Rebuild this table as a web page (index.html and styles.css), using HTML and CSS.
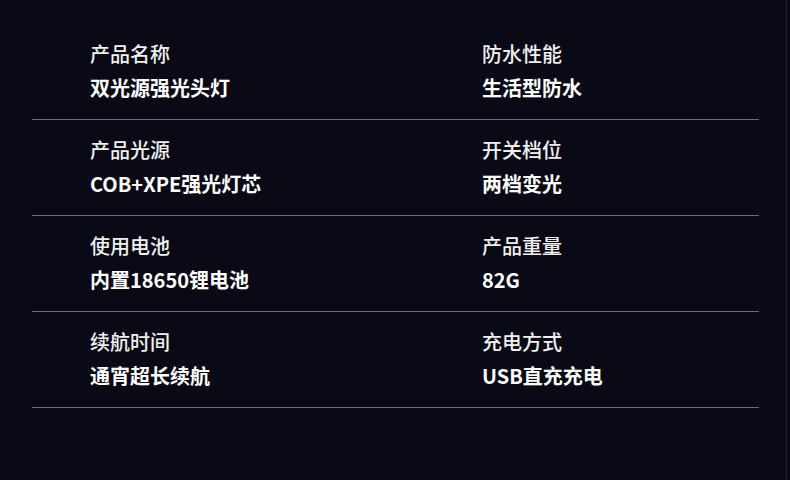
FILE: index.html
```html
<!DOCTYPE html>
<html lang="zh-CN">
<head>
<meta charset="utf-8">
<link rel="stylesheet" href="styles.css">
</head>
<body>
<div class="page">
  <div class="table">
    <div class="row">
      <div class="cell"><div class="label">产品名称</div><div class="value">双光源强光头灯</div></div>
      <div class="cell"><div class="label">防水性能</div><div class="value">生活型防水</div></div>
    </div>
    <div class="row">
      <div class="cell"><div class="label">产品光源</div><div class="value">COB+XPE强光灯芯</div></div>
      <div class="cell"><div class="label">开关档位</div><div class="value">两档变光</div></div>
    </div>
    <div class="row">
      <div class="cell"><div class="label">使用电池</div><div class="value">内置18650锂电池</div></div>
      <div class="cell"><div class="label">产品重量</div><div class="value">82G</div></div>
    </div>
    <div class="row">
      <div class="cell"><div class="label">续航时间</div><div class="value">通宵超长续航</div></div>
      <div class="cell"><div class="label">充电方式</div><div class="value">USB直充充电</div></div>
    </div>
  </div>
</div>
</body>
</html>
```
FILE: styles.css
```css
html, body {
  margin: 0;
  padding: 0;
  background: #0a0a16;
}
body {
  width: 790px;
  height: 480px;
  overflow: hidden;
  font-family: "Noto Sans CJK SC", "Noto Sans", sans-serif;
}
.page {
  width: 787px;
  height: 480px;
  border-right: 1px solid #20202c;
  padding-top: 24px;
  box-sizing: border-box;
}
.table {
  margin-left: 32px;
  width: 727px;
}
.row {
  display: grid;
  grid-template-columns: 392px 1fr;
  padding: 13px 0 0 58px;
  height: 82px;
  border-bottom: 1px solid #6c6c76;
}
.label {
  font-size: 20px;
  line-height: 34px;
  color: #f0f0f0;
  font-weight: 500;
}
.value {
  font-size: 20px;
  line-height: 34px;
  color: #ffffff;
  font-weight: 700;
}
```
